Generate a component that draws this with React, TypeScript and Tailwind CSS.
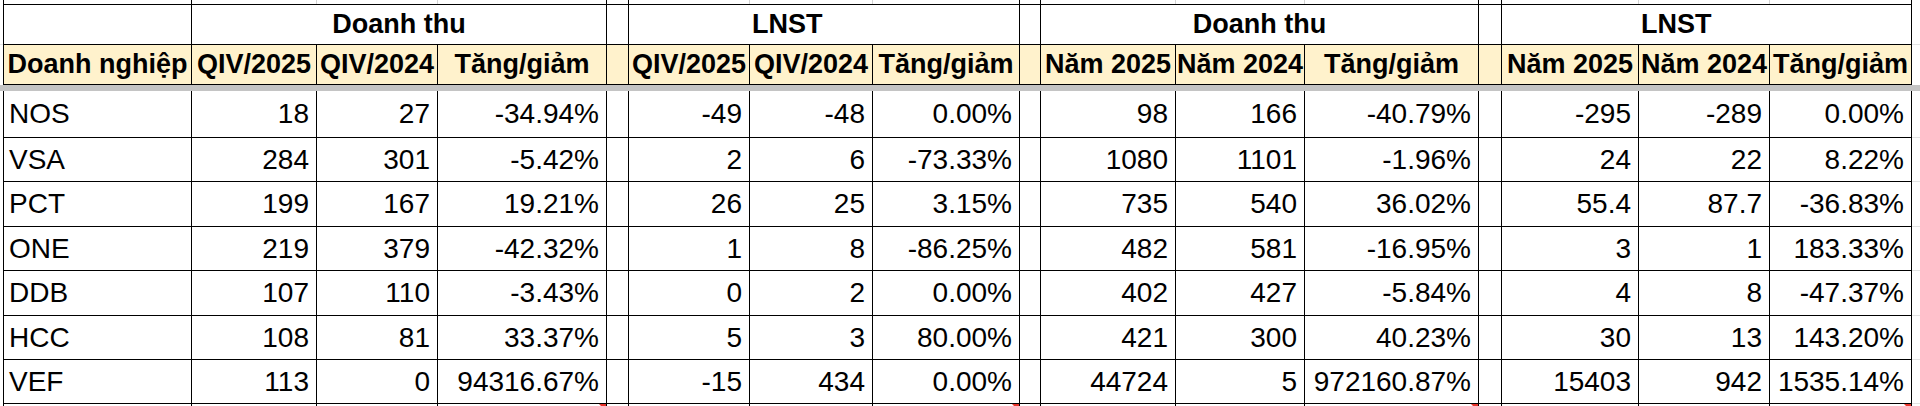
import React from "react";
import clsx from "clsx";

const COLS =
  "grid grid-cols-[3px_189px_125px_121px_169px_22px_121px_123px_147px_21px_135px_129px_174px_23px_137px_131px_142px_1fr]";

type Row = { name: string; vals: string[]; h: string };

const ROWS: Row[] = [
  { name: "NOS", h: "h-[47px]", vals: ["18", "27", "-34.94%", "-49", "-48", "0.00%", "98", "166", "-40.79%", "-295", "-289", "0.00%"] },
  { name: "VSA", h: "h-[44px]", vals: ["284", "301", "-5.42%", "2", "6", "-73.33%", "1080", "1101", "-1.96%", "24", "22", "8.22%"] },
  { name: "PCT", h: "h-[45px]", vals: ["199", "167", "19.21%", "26", "25", "3.15%", "735", "540", "36.02%", "55.4", "87.7", "-36.83%"] },
  { name: "ONE", h: "h-[44px]", vals: ["219", "379", "-42.32%", "1", "8", "-86.25%", "482", "581", "-16.95%", "3", "1", "183.33%"] },
  { name: "DDB", h: "h-[45px]", vals: ["107", "110", "-3.43%", "0", "2", "0.00%", "402", "427", "-5.84%", "4", "8", "-47.37%"] },
  { name: "HCC", h: "h-[44px]", vals: ["108", "81", "33.37%", "5", "3", "80.00%", "421", "300", "40.23%", "30", "13", "143.20%"] },
  { name: "VEF", h: "h-[44px]", vals: ["113", "0", "94316.67%", "-15", "434", "0.00%", "44724", "5", "972160.87%", "15403", "942", "1535.14%"] },
];

// narrow spacer columns sit after every 3rd value
const withGaps = (vals: string[]) => {
  const out: (string | null)[] = [];
  vals.forEach((v, i) => {
    out.push(v);
    if (i % 3 === 2 && i < vals.length - 1) out.push(null);
  });
  return out;
};

const Cell: React.FC<{ className?: string; children?: React.ReactNode }> = ({ className, children }) => (
  <div className={clsx("flex items-center border-r border-b border-black overflow-hidden whitespace-nowrap", className)}>
    {children}
  </div>
);

const Tail: React.FC = () => <div className="border-b border-[#e2e3e3]" />;

const HEAD2 = ["QIV/2025", "QIV/2024", "Tăng/giảm", null, "QIV/2025", "QIV/2024", "Tăng/giảm", null, "Năm 2025", "Năm 2024", "Tăng/giảm", null, "Năm 2025", "Năm 2024", "Tăng/giảm"];

// top strip: remnants of the row above
const STRIP = ["dark", "light", "light", "dark", "dark", "light", "light", "dark", "dark", "light", "light", "dark", "dark", "light", "light", "dark"];

export default function App() {
  return (
    <div className="w-[1920px] h-[406px] overflow-hidden bg-white text-black font-['Liberation_Sans',Arial,sans-serif]">
      {/* strip */}
      <div className={clsx(COLS, "h-[4px]")}>
        <div />
        {STRIP.map((s, i) => (
          <div
            key={i}
            className={clsx(
              "border-r",
              s === "dark" ? "border-black" : "border-[#d4d4d4]",
              i === 0 && "border-l border-l-black"
            )}
          />
        ))}
        <div />
      </div>

      {/* header row 1 */}
      <div className={clsx(COLS, "h-[41px] text-[27px] font-bold leading-none")}>
        <div className="border-b border-[#e2e3e3]" />
        <Cell className="border-l border-t" />
        <Cell className="col-span-3 border-t justify-center">Doanh thu</Cell>
        <Cell className="border-t" />
        <div className="border-t border-b border-black" />
        <Cell className="col-span-2 border-t pl-[2px]">LNST</Cell>
        <Cell className="border-t" />
        <Cell className="col-span-3 border-t justify-center">Doanh thu</Cell>
        <Cell className="border-t" />
        <div className="border-t border-b border-black" />
        <Cell className="col-span-2 border-t pl-[2px]">LNST</Cell>
        <Tail />
      </div>

      {/* header row 2 */}
      <div className={clsx(COLS, "h-[40px] text-[27px] font-bold leading-none")}>
        <div />
        <Cell className="border-l bg-[#fff2cc] justify-center">Doanh nghiệp</Cell>
        {HEAD2.map((h, i) => (
          <Cell key={i} className="bg-[#fff2cc] justify-center">
            {h}
          </Cell>
        ))}
        <div />
      </div>

      {/* frozen divider */}
      <div className="h-[6px] bg-[#c4c4c4]" />

      {/* data */}
      {ROWS.map((r) => (
        <div key={r.name} className={clsx(COLS, r.h, "text-[28px] leading-none")}>
          <div />
          <Cell className="border-l pl-[5px]">{r.name}</Cell>
          {withGaps(r.vals).map((v, i) => (
            <Cell key={i} className="justify-end pr-[7px]">
              {v}
            </Cell>
          ))}
          <Tail />
        </div>
      ))}

      {/* next row, cut off */}
      <div className={clsx(COLS, "h-[3px]")}>
        <div />
        {STRIP.map((s, i) => (
          <div key={i} className={clsx("relative border-r border-black", i === 0 && "border-l")}>
            {(i === 3 || i === 7 || i === 11 || i === 15) && (
              <span className="absolute right-0 top-0 h-0 w-0 border-l-[7px] border-b-[7px] border-l-transparent border-b-transparent border-t-[7px] border-t-[#e8332b] border-r-0" />
            )}
          </div>
        ))}
        <div />
      </div>
    </div>
  );
}
